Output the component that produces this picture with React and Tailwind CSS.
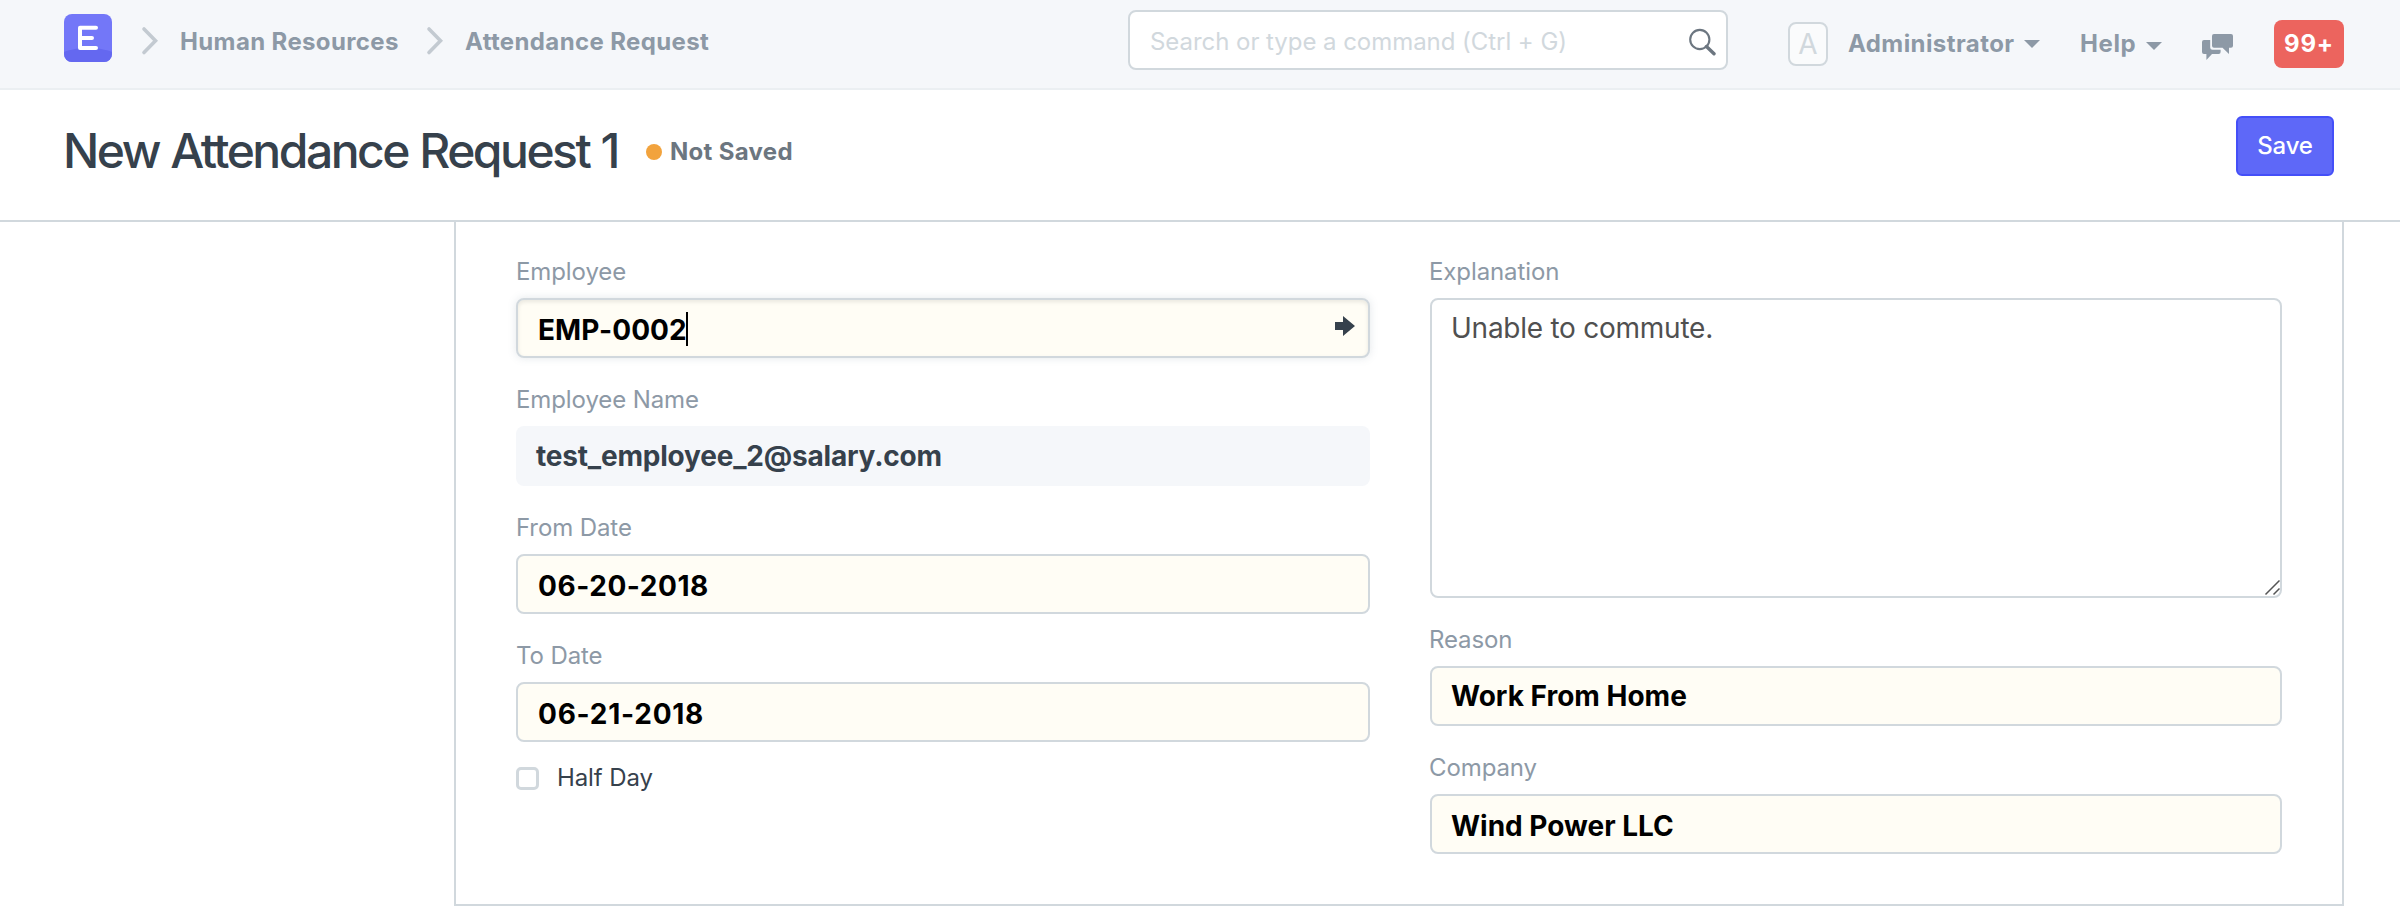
function Logo() {
  return (
    <svg className="mt-3.5 size-12 shrink-0" viewBox="0 0 48 48" fill="none">
      <defs>
        <clipPath id="logo-clip">
          <rect width="48" height="48" rx="8" />
        </clipPath>
      </defs>
      <g clipPath="url(#logo-clip)">
        <rect width="48" height="48" fill="#7377f8" />
        <path d="M0 38C6 35.500 15 34 24 34s18 1.500 24 4v10H0Z" fill="#6468f0" />
      </g>
      <path d="M32 13.800H16V34h16M16 24h12" stroke="#fff" strokeWidth="4" strokeLinecap="round" strokeLinejoin="round" />
    </svg>
  );
}

function Chevron({ className }) {
  return (
    <svg className={`mt-[26px] h-[30px] w-[18px] shrink-0 ${className}`} viewBox="0 0 18 30" fill="none">
      <path d="M3 3l11.500 11.800L3 26.500" stroke="#c3cad1" strokeWidth="3.600" strokeLinecap="round" />
    </svg>
  );
}

function Caret({ className }) {
  return (
    <svg className={`h-2 w-4 shrink-0 ${className}`} viewBox="0 0 16 8">
      <path d="M0 0h16L8 8Z" fill="#8d99a6" />
    </svg>
  );
}

function Label({ children, className = "" }) {
  return <div className={`mb-3 text-[24px] leading-[29px] tracking-[-0.1px] text-[#8d99a6] ${className}`}>{children}</div>;
}

function Field({ label, labelClass, className, children }) {
  return (
    <div>
      <Label className={labelClass}>{label}</Label>
      <div className={`flex h-[60px] rounded-lg text-[28px] leading-[34px] font-bold ${className}`}>{children}</div>
    </div>
  );
}

const required = "border-2 border-[#d1d8dd] bg-[#fffdf5] pr-5 text-black";

export default function App() {
  return (
    <div className="h-[922px] w-[2400px] overflow-hidden bg-white font-['Inter',sans-serif]">
      <nav className="flex h-[90px] items-start border-b-2 border-[#ebeff2] bg-[#f5f7fa] pl-16 text-[24px] leading-[29px] font-bold text-[#8d99a6]">
        <div className="flex w-[1064px] items-start">
          <Logo />
          <Chevron className="ml-[29px]" />
          <span className="mt-[27px] ml-[21px] w-[224px] tracking-[0.37px] whitespace-nowrap">Human Resources</span>
          <Chevron className="ml-[22px]" />
          <span className="mt-[27px] ml-[21px] tracking-[0.37px] whitespace-nowrap">Attendance Request</span>
        </div>
        <div className="mt-2.5 flex h-[60px] w-[600px] items-start justify-between rounded-lg border-2 border-[#d1d8dd] bg-white pr-2.5 pl-5 font-normal text-[#d1d8dd]">
          <span className="mt-[15px] tracking-[-0.05px]">Search or type a command (Ctrl + G)</span>
          <svg className="mt-4 h-[30px] w-[30px]" viewBox="0 0 30 30" fill="none" stroke="#6c7680">
            <circle cx="13.800" cy="11.500" r="9.600" strokeWidth="2.100" />
            <path d="M20.500 18.500l7.500 7.300" strokeWidth="3.400" strokeLinecap="round" />
          </svg>
        </div>
        <div className="mt-[22px] ml-[60px] flex h-11 w-10 justify-center rounded-lg border-2 border-[#d1d8dd] bg-[#fafbfc] pt-[3px] text-[28px] leading-[34px] font-normal text-[#d1d8dd]">
          A
        </div>
        <div className="mt-[29px] ml-5 flex w-[192px] items-start justify-between">
          <span className="tracking-[0.42px]">Administrator</span>
          <Caret className="mt-[11px]" />
        </div>
        <div className="mt-[29px] ml-10 flex w-[82px] items-start justify-between">
          <span className="tracking-[0.6px]">Help</span>
          <Caret className="mt-[13px]" />
        </div>
        <svg className="mt-[34px] ml-10 h-[26px] w-[31px] shrink-0" viewBox="0 0 31 26" fill="#8d99a6">
          <path d="M12 0H29a2 2 0 0 1 2 2V11.800a2 2 0 0 1-2 2H27V20L20.500 13.800H12a2 2 0 0 1-2-2V2a2 2 0 0 1 2-2Z" />
          <path d="M2 6H8.200V13.500a2.200 2.200 0 0 0 2.200 2.200H18.600V18a2 2 0 0 1-2 2H10L4.400 26V20H2a2 2 0 0 1-2-2V8a2 2 0 0 1 2-2Z" />
        </svg>
        <div className="mt-5 ml-[41px] flex h-12 w-[70px] justify-center rounded-lg bg-[#ec645e] pt-[9px] tracking-[0.8px] text-white">99+</div>
      </nav>

      <header className="flex h-[132px] items-start justify-between border-b-2 border-[#d1d8dd] pr-[66px] pl-[63px]">
        <div className="flex items-start">
          <h1 className="mt-[31px] w-[583px] text-[48px] leading-[59px] font-medium tracking-[-2.5px] whitespace-nowrap text-[#36414c] [word-spacing:1px]">
            New Attendance Request 1
          </h1>
          <span className="mt-[54px] size-4 rounded-full bg-[#f2a33d]" />
          <span className="mt-[47px] ml-2 text-[24px] leading-[29px] font-bold tracking-[0.3px] text-[#6c7680]">Not Saved</span>
        </div>
        <button className="mt-[26px] flex h-[60px] w-[98px] justify-center rounded-md border-2 border-[#444ff8] bg-[#5e68f8] pt-[13px] text-[24px] leading-[29px] font-medium tracking-[-0.2px] text-white">
          Save
        </button>
      </header>

      <main className="ml-[454px] flex h-[684px] w-[1890px] gap-[60px] border-2 border-t-0 border-[#d1d8dd] px-[60px] pt-[35px]">
        <section className="flex w-[854px] flex-col gap-[27px]">
          <Field
            label="Employee"
            className={`${required} pt-[13px] pl-5 tracking-[0.1px] shadow-[inset_0_2px_4px_rgba(0,0,0,0.09),0_0_8px_rgba(102,120,140,0.18)]`}
          >
            <span>EMP-0002</span>
            <span className="-mt-px -ml-px h-[34px] w-0.5 bg-black" />
            <svg className="mt-[3px] mr-[-7px] ml-auto size-5" viewBox="0 0 20 20">
              <path d="M0 6h8V0l12 10L8 20v-6H0Z" fill="#36414c" />
            </svg>
          </Field>
          <Field label="Employee Name" className="bg-[#f5f7fa] px-5 pt-[13px] tracking-[-0.2px] text-[#36414c]">
            test_employee_2@salary.com
          </Field>
          <Field label="From Date" className={`${required} pt-[13px] pl-5 tracking-[0.55px]`}>
            06-20-2018
          </Field>
          <div>
            <Field label="To Date" className={`${required} pt-[13px] pl-5 tracking-[0.75px]`}>
              06-21-2018
            </Field>
            <div className="mt-[21px] flex text-[24px] leading-[29px] tracking-[-0.1px] text-[#36414c]">
              <span className="mt-1 size-[23px] rounded-[5px] border-[3px] border-[#d1d8dd] bg-white" />
              <span className="ml-[18px]">Half Day</span>
            </div>
          </div>
        </section>

        <section className="flex w-[852px] flex-col gap-[27px]">
          <div>
            <Label className="-ml-px">Explanation</Label>
            <div className="flex h-[300px] justify-between rounded-lg border-2 border-[#d1d8dd] bg-white pt-[11px] pl-[19px] text-[28px] leading-[34px] tracking-[-0.25px] text-[#505050]">
              <span>Unable to commute.</span>
              <svg className="size-4 self-end" viewBox="0 0 16 16" fill="none" stroke="#555" strokeWidth="1.500">
                <path d="M1.500 14.500L15.500 .5M9.500 14.500l6-6" />
              </svg>
            </div>
          </div>
          <Field label="Reason" labelClass="-ml-px" className={`${required} pt-[11px] pl-[19px]`}>
            Work From Home
          </Field>
          <Field label="Company" labelClass="-ml-px" className={`${required} pt-[13px] pl-[19px]`}>
            Wind Power LLC
          </Field>
        </section>
      </main>
    </div>
  );
}
